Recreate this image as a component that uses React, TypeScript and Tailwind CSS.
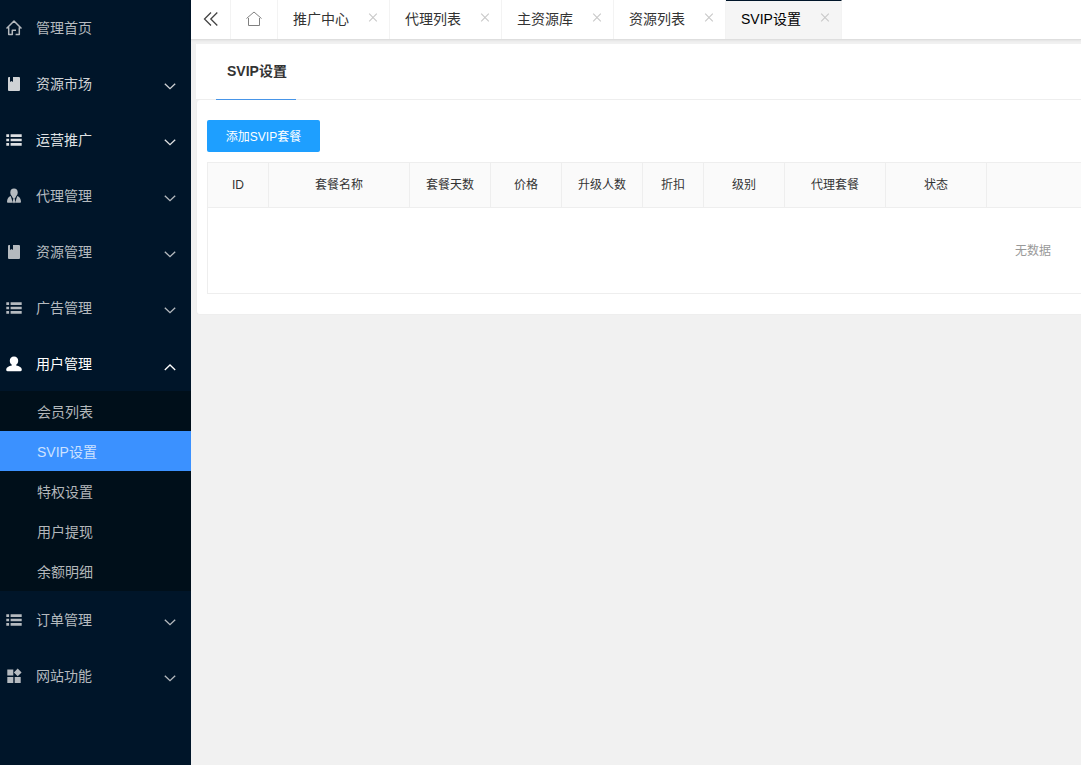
import type { ReactNode } from 'react';

type IconName = 'home' | 'book' | 'list' | 'agent' | 'user' | 'apps';

const shapes: Record<IconName, ReactNode> = {
  home: (
    <path
      d="M.5 8.500 8 1l7.500 7.500M2.700 7.200v7.300h3.600v-4.300h3.700M13.300 7.200v7.300H9.600"
      fill="none"
      stroke="currentColor"
      strokeWidth="1.5"
      strokeLinejoin="round"
    />
  ),
  book: <path d="M2 2q0-1 1-1h1v5l1.500-1L7 6V1h6q1 0 1 1v12q0 1-1 1H3q-1 0-1-1z" fill="currentColor" />,
  list: (
    <path
      d="M.3 2.300h2.800v2.600H.3zM4.600 2.300h11.100v2.600H4.600zM.3 6.700h2.800v2.600H.3zM4.600 6.700h11.100v2.600H4.600zM.3 11.100h2.800v2.600H.3zM4.600 11.100h11.100v2.600H4.600z"
      fill="currentColor"
    />
  ),
  agent: (
    <>
      <ellipse cx="8" cy="4.500" rx="3.700" ry="3.900" fill="currentColor" />
      <path
        d="M4.700 8 6.900 14.800H1.800q-.8 0-.8-1C1.100 10.800 2.500 8.700 4.700 8zM11.300 8 9.100 14.800h5.100q.8 0 .8-1C14.900 10.800 13.500 8.700 11.300 8zM5.500 7.800h5L9.200 9.900H6.800zM7.400 9.600h1.200l.6 4.400L8 15.500 6.800 14z"
        fill="currentColor"
      />
    </>
  ),
  user: (
    <path
      d="M8 .4c2.600 0 4.200 1.900 4.200 4.300 0 1.800-.8 3.300-2 4.100v.8c3.100.6 5.600 1.800 5.600 4 0 1-.4 1.600-1.400 1.600H1.600c-1 0-1.400-.6-1.400-1.600 0-2.200 2.500-3.400 5.600-4v-.8c-1.200-.8-2-2.300-2-4.100C3.800 2.300 5.400.4 8 .4z"
      fill="currentColor"
    />
  ),
  apps: (
    <path
      d="M1.300 1.600h6v6h-6zM1.300 8.900h6v6h-6zM8.700 8.900h6v6h-6zM11.700.5l3.900 3.900-3.900 3.800-3.800-3.800z"
      fill="currentColor"
    />
  ),
};

function MenuRow({ icon, label, arrow, tone, height = 'h-14' }: { icon: IconName; label: string; arrow?: 'up' | 'down'; tone: string; height?: string }) {
  return (
    <a className={`flex shrink-0 items-start pl-1.5 pr-[15px] pt-[18px] ${height} ${tone}`}>
      <svg className="mt-0.5 size-4" viewBox="0 0 16 16">{shapes[icon]}</svg>
      <span className="ml-3.5 flex-1 leading-5">{label}</span>
      {arrow && (
        <svg className="mt-[7px] h-3 w-3 overflow-visible" viewBox="0 0 12 12" fill="none" stroke="currentColor" strokeWidth="1.3">
          <path d={arrow === 'down' ? 'M.8 2.700 6 7.700l5.200-5' : 'M.8 9 6 4l5.200 5'} />
        </svg>
      )}
    </a>
  );
}

const subItems = ['会员列表', 'SVIP设置', '特权设置', '用户提现', '余额明细'];
const tabs = ['推广中心', '代理列表', '主资源库', '资源列表', 'SVIP设置'];
const columns = [
  ['ID', 'w-[61px]'],
  ['套餐名称', 'w-[141px]'],
  ['套餐天数', 'w-[81px]'],
  ['价格', 'w-[71px]'],
  ['升级人数', 'w-[81px]'],
  ['折扣', 'w-[61px]'],
  ['级别', 'w-[81px]'],
  ['代理套餐', 'w-[101px]'],
  ['状态', 'w-[101px]'],
];

function Sidebar() {
  const muted = 'text-[#b5babf]';
  return (
    <nav className="flex w-[191px] shrink-0 flex-col bg-[#001529]">
      <MenuRow icon="home" label="管理首页" tone={muted} />
      <MenuRow icon="book" label="资源市场" arrow="down" tone="text-[#cfd2d5]" />
      <MenuRow icon="list" label="运营推广" arrow="down" tone="text-[#dfe1e3]" />
      <MenuRow icon="agent" label="代理管理" arrow="down" tone={muted} />
      <MenuRow icon="book" label="资源管理" arrow="down" tone={muted} />
      <MenuRow icon="list" label="广告管理" arrow="down" tone={muted} />
      <MenuRow icon="user" label="用户管理" arrow="up" tone="text-white" height="h-[55px]" />
      <div className="mb-px bg-[#000f1a] text-[#b3b7ba]">
        {subItems.map((item) => (
          <a
            key={item}
            className={`block h-10 pl-[37px] pt-px leading-10 ${item === 'SVIP设置' ? 'bg-[#3b91ff] text-[#cde2ff]' : ''}`}
          >
            {item}
          </a>
        ))}
      </div>
      <MenuRow icon="list" label="订单管理" arrow="down" tone={muted} />
      <MenuRow icon="apps" label="网站功能" arrow="down" tone={muted} />
    </nav>
  );
}

function TabBar() {
  return (
    <header className="z-10 flex h-10 shrink-0 border-b border-[#dedede] bg-white shadow-[0_1px_2px_rgba(0,0,0,0.06)]">
      <div className="flex w-10 justify-center border-r border-[#f3f3f3] pt-[11px] text-[#444]">
        <svg className="size-4" viewBox="0 0 16 16" fill="none" stroke="currentColor" strokeWidth="1.3">
          <path d="M8 1.500 1.500 8 8 14.500M14.300 1.500 7.800 8l6.500 6.500" />
        </svg>
      </div>
      <div className="flex w-[47px] justify-center border-r border-[#f3f3f3] pt-[11px] text-[#808080]">
        <svg className="size-4" viewBox="0 0 16 16" fill="none" stroke="currentColor" strokeWidth="1">
          <path d="M.5 7.500 8 1l7.500 6.500M2.500 7v7.500h11V7" />
        </svg>
      </div>
      {tabs.map((tab) => {
        const active = tab === 'SVIP设置';
        return (
          <div
            key={tab}
            className={`flex items-start border-r border-[#f3f3f3] pl-[15px] pr-[11px] ${
              active ? 'w-[116px] border-t border-t-[#001529] bg-[#f5f5f5] text-black' : 'w-28 pt-px text-[#333]'
            }`}
          >
            <span className="flex-1 pt-2 leading-5">{tab}</span>
            <svg className="mt-[11px] size-2.5" viewBox="0 0 10 10" stroke="#c8c8c8" strokeWidth="1.1">
              <path d="m1.200 1.700 7.600 7.600M8.800 1.700 1.200 9.300" />
            </svg>
          </div>
        );
      })}
    </header>
  );
}

export default function App() {
  return (
    <div className="flex h-[765px] w-full overflow-hidden bg-[#f1f1f1] font-['Liberation_Sans','Noto_Sans_CJK_SC',sans-serif] text-sm text-[#333]">
      <Sidebar />
      <div className="flex min-w-0 flex-1 flex-col">
        <TabBar />
        <main className="ml-[5px] mt-1 flex min-w-0 flex-col">
          <div className="flex h-14 shrink-0 border-b border-[#eeeeee] bg-white pl-5">
            <div className="-mb-px w-20 border-b border-[#4795e8] pl-[11px] font-bold leading-[54px]">SVIP设置</div>
          </div>
          <section className="h-[215px] overflow-hidden rounded-l-sm border border-r-0 border-t-0 border-[#eeeeee] bg-white pl-2.5 pt-5 text-xs">
            <button className="block h-8 w-[113px] rounded-[2px] bg-[#1e9fff] pt-px leading-8 text-white">添加SVIP套餐</button>
            <div className="mt-2.5 w-[1652px] border border-[#eeeeee]">
              <div className="flex h-[45px] border-b border-[#eeeeee] bg-[#fafafa]">
                {columns.map(([label, width]) => (
                  <div key={label} className={`${width} shrink-0 border-r border-[#eeeeee] text-center leading-[45px]`}>
                    {label}
                  </div>
                ))}
              </div>
              <div className="h-[85px] text-center leading-[87px] text-[#999]">无数据</div>
            </div>
          </section>
        </main>
      </div>
    </div>
  );
}
